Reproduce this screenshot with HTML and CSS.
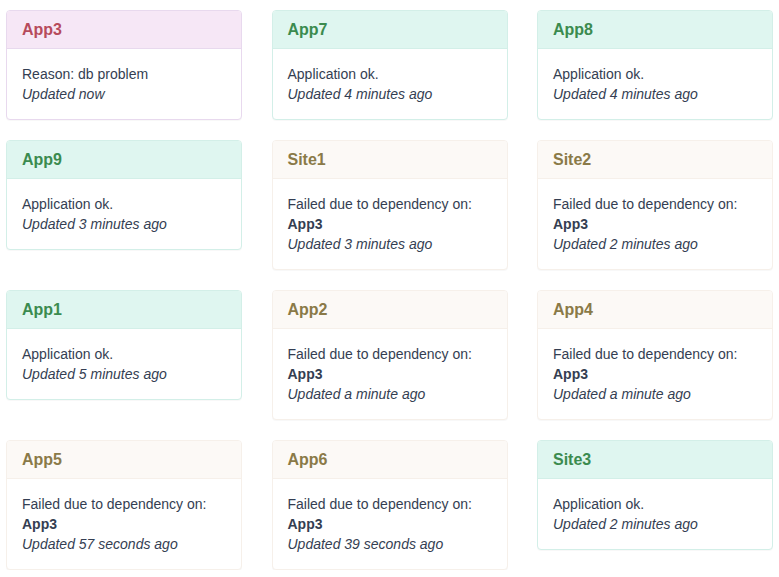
FILE: index.html
```html
<!DOCTYPE html>
<html>
<head>
<meta charset="utf-8">
<link rel="stylesheet" href="styles.css">
</head>
<body>
<div class="grid">
  <div class="panel danger"><div class="head">App3</div><div class="body">Reason: db problem<br><em>Updated now</em></div></div>
  <div class="panel ok"><div class="head">App7</div><div class="body">Application ok.<br><em>Updated 4 minutes ago</em></div></div>
  <div class="panel ok"><div class="head">App8</div><div class="body">Application ok.<br><em>Updated 4 minutes ago</em></div></div>

  <div class="panel ok"><div class="head">App9</div><div class="body">Application ok.<br><em>Updated 3 minutes ago</em></div></div>
  <div class="panel warn"><div class="head">Site1</div><div class="body">Failed due to dependency on:<br><strong>App3</strong><br><em>Updated 3 minutes ago</em></div></div>
  <div class="panel warn"><div class="head">Site2</div><div class="body">Failed due to dependency on:<br><strong>App3</strong><br><em>Updated 2 minutes ago</em></div></div>

  <div class="panel ok"><div class="head">App1</div><div class="body">Application ok.<br><em>Updated 5 minutes ago</em></div></div>
  <div class="panel warn"><div class="head">App2</div><div class="body">Failed due to dependency on:<br><strong>App3</strong><br><em>Updated a minute ago</em></div></div>
  <div class="panel warn"><div class="head">App4</div><div class="body">Failed due to dependency on:<br><strong>App3</strong><br><em>Updated a minute ago</em></div></div>

  <div class="panel warn"><div class="head">App5</div><div class="body">Failed due to dependency on:<br><strong>App3</strong><br><em>Updated 57 seconds ago</em></div></div>
  <div class="panel warn"><div class="head">App6</div><div class="body">Failed due to dependency on:<br><strong>App3</strong><br><em>Updated 39 seconds ago</em></div></div>
  <div class="panel ok"><div class="head">Site3</div><div class="body">Application ok.<br><em>Updated 2 minutes ago</em></div></div>
</div>
</body>
</html>
```
FILE: styles.css
```css
html, body {
  margin: 0;
  padding: 0;
  background: #fff;
}
body {
  font-family: "Liberation Sans", Arial, sans-serif;
  font-size: 14px;
  line-height: 20px;
  color: #343e52;
}
.grid {
  display: grid;
  grid-template-columns: repeat(3, 1fr);
  column-gap: 29.5px;
  row-gap: 20px;
  align-items: start;
  width: 767px;
  padding: 10px 0 0 6px;
}
.panel {
  border: 1px solid #ddd;
  border-radius: 4px;
  background: #fff;
  box-shadow: 0 1px 1px rgba(0,0,0,0.03);
}
.head {
  padding: 10px 15px;
  font-size: 16px;
  line-height: 17px;
  font-weight: bold;
  border-bottom: 1px solid #ddd;
  border-radius: 3px 3px 0 0;
}
.body {
  padding: 15px;
}
.body strong { font-weight: bold; }
.danger { border-color: #e8d9ee; }
.danger .head { background: #f6e7f6; color: #b64b5c; border-bottom-color: #e8d9ee; }
.ok { border-color: #d3efe8; }
.ok .head { background: #dff6f0; color: #3b8b4f; border-bottom-color: #d3efe8; }
.warn { border-color: #f6f0ea; }
.warn .head { background: #fcf9f6; color: #8a7a48; border-bottom-color: #f6f0ea; }
```
